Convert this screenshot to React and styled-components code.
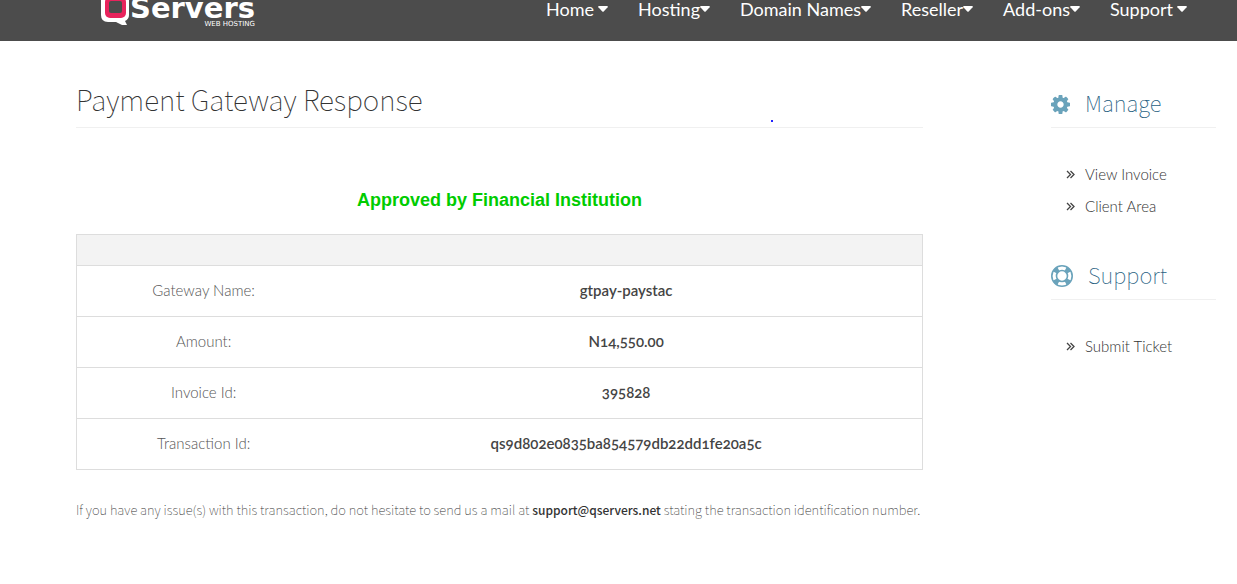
import React from 'react';
import styled, { createGlobalStyle } from 'styled-components';

const GlobalStyle = createGlobalStyle`
  *, *::before, *::after { box-sizing: border-box; }
  body {
    margin: 0;
    background: #fff;
    color: #555;
    font-family: Lato, "Open Sans", sans-serif;
    font-size: 15px;
    font-weight: 300;
  }
`;

const sourceSans = '"Noto Sans CJK SC", "Noto Sans", sans-serif';

const Header = styled.header`
  display: flex;
  justify-content: space-between;
  align-items: flex-end;
  height: 41px;
  padding: 0 50px 0 100px;
  overflow: hidden;
  background: #4c4c4c;
`;

const Logo = styled.a`
  display: flex;
  align-items: flex-end;
  padding-bottom: 13px;
  color: #fff;
  text-decoration: none;
`;

const LogoMark = styled.svg`
  display: block;
  width: 30px;
  height: 32px;
  margin-bottom: 3px;
`;

const Wordmark = styled.span`
  display: flex;
  flex-direction: column;
  font-family: "DejaVu Sans", sans-serif;
`;

const LogoName = styled.span`
  font-size: 29px;
  font-weight: 700;
  line-height: 24px;
`;

const LogoTagline = styled.span`
  align-self: flex-end;
  font-size: 7px;
  font-weight: 400;
  line-height: 8px;
`;

const Nav = styled.nav`
  display: flex;
  gap: 30px;
  padding-bottom: 20px;
`;

const NavLink = styled.a`
  display: flex;
  align-items: center;
  gap: ${({ $spaced }) => ($spaced ? '4px' : '0')};
  color: #fff;
  font-size: 18px;
  font-weight: 400;
  line-height: 24px;
  text-decoration: none;
  white-space: nowrap;
`;

const Caret = styled.svg`
  display: block;
  width: 10px;
  height: 6px;
`;

const Page = styled.div`
  display: grid;
  grid-template-columns: 847fr 165fr;
  column-gap: 128px;
  align-items: start;
  padding: 36px 21px 48px 76px;
`;

const Title = styled.h1`
  position: relative;
  margin: 0;
  padding: 2px 0 8px;
  border-bottom: 1px solid #f0f0f0;
  color: #333;
  font-family: ${sourceSans};
  font-size: 28px;
  font-weight: 100;
  line-height: 40px;
`;

const Dot = styled.span`
  position: absolute;
  right: 150px;
  bottom: 5px;
  width: 2px;
  height: 2px;
  background: #22f;
`;

const Status = styled.p`
  margin: 60px 0 22px;
  color: #0c0;
  font-family: "Liberation Sans", Arial, sans-serif;
  font-size: 18px;
  font-weight: 700;
  line-height: 24px;
  text-align: center;
`;

const Table = styled.table`
  width: 100%;
  border: 1px solid #ddd;
  border-collapse: collapse;
  table-layout: fixed;
`;

const HeadCell = styled.td`
  height: 31px;
  padding: 0;
  background: #f3f3f3;
`;

const Row = styled.tr`
  border-top: 1px solid #ddd;
`;

const LabelCell = styled.th`
  height: 51px;
  padding: 0 8px 2px;
  color: #555;
  font-weight: 300;
  text-align: center;
`;

const ValueCell = styled.td`
  padding: 0 8px 2px;
  color: #444;
  font-variant-numeric: oldstyle-nums;
  font-weight: 600;
  text-align: center;
`;

const Note = styled.p`
  margin: 30px -8px 0 0;
  color: #333;
  font-family: ${sourceSans};
  font-size: 13px;
  font-weight: 100;
  line-height: 20px;

  strong {
    color: #333;
    font-size: 12px;
    font-weight: 500;
  }
`;

const SideTitle = styled.h2`
  display: flex;
  align-items: center;
  gap: 15px;
  margin: 0;
  padding: 8px 0 4px;
  border-bottom: 1px solid #f0f0f0;
  color: #26607f;
  font-family: ${sourceSans};
  font-size: 22px;
  font-weight: 100;
  line-height: 34px;
`;

const SideTitleText = styled.span`
  padding-bottom: 4px;
`;

const SideIcon = styled.svg`
  display: block;
  flex: none;
  width: ${({ $size }) => $size}px;
  height: ${({ $size }) => $size}px;
  fill: #6aa3bb;
`;

const SideList = styled.ul`
  margin: 0;
  padding: 30px 0 27px 15px;
  list-style: none;
`;

const SideLink = styled.a`
  display: flex;
  align-items: center;
  gap: 10px;
  color: #333;
  line-height: 32px;
  text-decoration: none;
  white-space: nowrap;
`;

const Chevrons = styled.svg`
  display: block;
  width: 9px;
  height: 9px;
  fill: none;
  stroke: #444;
`;

const menu = [
  { label: 'Home', spaced: true },
  { label: 'Hosting' },
  { label: 'Domain Names' },
  { label: 'Reseller' },
  { label: 'Add-ons' },
  { label: 'Support', spaced: true },
];

const details = [
  ['Gateway Name:', 'gtpay-paystac'],
  ['Amount:', 'N14,550.00'],
  ['Invoice Id:', '395828'],
  ['Transaction Id:', 'qs9d802e0835ba854579db22dd1fe20a5c'],
];

const GearIcon = () => (
  <SideIcon $size={19} viewBox="0 128 1536 1536" aria-hidden="true">
    <path d="M1024 896q0-106-75-181t-181-75-181 75-75 181 75 181 181 75 181-75 75-181zm512-109v222q0 12-8 23t-20 13l-185 28q-19 54-39 91 35 50 107 138 10 12 10 25t-9 23q-27 37-99 108t-94 71q-12 0-26-9l-138-108q-44 23-91 38-16 136-29 186-7 28-36 28h-222q-14 0-24.500-8.500t-11.500-21.500l-28-184q-49-16-90-37l-141 107q-10 9-25 9-14 0-25-11-126-114-165-168-7-10-7-23 0-12 8-23 15-21 51-66.500t54-70.500q-27-50-41-99l-183-27q-13-2-21-12.500t-8-23.500v-222q0-12 8-23t19-13l186-28q14-46 39-92-40-57-107-138-10-12-10-24 0-10 9-23 26-36 98.500-107.500t94.500-71.500q13 0 26 10l138 107q44-23 91-38 16-136 29-186 7-28 36-28h222q14 0 24.500 8.500t11.500 21.500l28 184q49 16 90 37l142-107q9-9 24-9 13 0 25 10 129 119 165 170 7 8 7 22 0 12-8 23-15 21-51 66.500t-54 70.500q26 50 41 98l183 28q13 2 21 12.500t8 23.500z" />
  </SideIcon>
);

const LifeRingIcon = () => (
  <SideIcon $size={22} viewBox="0 0 22 22" aria-hidden="true">
    <g fill="none" stroke="#6aa3bb">
      <circle cx="11" cy="11" r="10.200" strokeWidth="1.600" />
      <circle cx="11" cy="11" r="5.500" strokeWidth="1.600" />
      <path
        d="M3.900 7.300A8 8 0 0 1 7.300 3.900M14.700 3.900A8 8 0 0 1 18.100 7.300M18.100 14.700A8 8 0 0 1 14.700 18.100M7.300 18.100A8 8 0 0 1 3.900 14.700"
        strokeWidth="5"
      />
    </g>
  </SideIcon>
);

function SideSection({ title, icon, links }) {
  return (
    <section>
      <SideTitle>
        {icon}
        <SideTitleText>{title}</SideTitleText>
      </SideTitle>
      <SideList>
        {links.map((link) => (
          <li key={link}>
            <SideLink href="#">
              <Chevrons viewBox="0 0 9 9" aria-hidden="true">
                <path d="M1 1l3.500 3.500L1 8M4.500 1L8 4.500 4.500 8" strokeWidth="1.300" />
              </Chevrons>
              {link}
            </SideLink>
          </li>
        ))}
      </SideList>
    </section>
  );
}

export default function App() {
  return (
    <>
      <GlobalStyle />
      <Header>
        <Logo href="#" aria-label="QServers Web Hosting">
          <LogoMark viewBox="0 0 30 32" aria-hidden="true">
            <path d="M8 0h14q7 0 7 7v15q0 4-4 6l2 4h-5l-6-3H8q-7 0-7-7V7q0-7 7-7z" fill="#fff" />
            <rect x="5" y="4" width="21" height="21" rx="5" fill="#e8235c" />
            <rect x="9" y="8" width="13" height="12" rx="2" fill="#4c4c4c" />
          </LogoMark>
          <Wordmark>
            <LogoName>Servers</LogoName>
            <LogoTagline>WEB HOSTING</LogoTagline>
          </Wordmark>
        </Logo>
        <Nav>
          {menu.map(({ label, spaced }) => (
            <NavLink key={label} href="#" $spaced={spaced}>
              {label}
              <Caret viewBox="0 0 10 6" aria-hidden="true">
                <path d="M.8 0h8.400q1 .2.400 1.200L5.700 5.400q-.7.700-1.400 0L.4 1.200Q-.2.200.8 0z" fill="#fff" />
              </Caret>
            </NavLink>
          ))}
        </Nav>
      </Header>
      <Page>
        <main>
          <Title>
            Payment Gateway Response
            <Dot />
          </Title>
          <Status>Approved by Financial Institution</Status>
          <Table>
            <colgroup>
              <col width="30%" />
              <col width="70%" />
            </colgroup>
            <thead>
              <tr>
                <HeadCell colSpan={2} />
              </tr>
            </thead>
            <tbody>
              {details.map(([label, value]) => (
                <Row key={label}>
                  <LabelCell scope="row">{label}</LabelCell>
                  <ValueCell>{value}</ValueCell>
                </Row>
              ))}
            </tbody>
          </Table>
          <Note>
            If you have any issue(s) with this transaction, do not hesitate to send us a mail at{' '}
            <strong>support@qservers.net</strong> stating the transaction identification number.
          </Note>
        </main>
        <aside>
          <SideSection title="Manage" icon={<GearIcon />} links={['View Invoice', 'Client Area']} />
          <SideSection title="Support" icon={<LifeRingIcon />} links={['Submit Ticket']} />
        </aside>
      </Page>
    </>
  );
}
